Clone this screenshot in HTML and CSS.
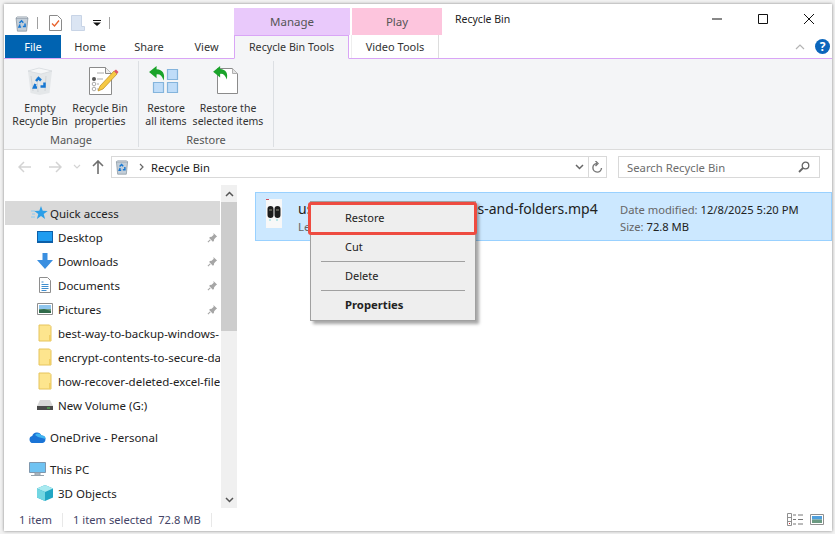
FILE: index.html
```html
<!DOCTYPE html>
<html lang="en">
<head>
<meta charset="utf-8">
<title>Recycle Bin</title>
<link rel="stylesheet" href="styles.css">
</head>
<body>
<svg class="defs" width="0" height="0">
  <defs>
    <symbol id="bin" viewBox="0 0 16 20">
      <path d="M1 3.500h14l-1.600 15.500H2.600z" fill="#c3ced8" stroke="#7d8a96" stroke-width=".8"/>
      <path d="M2.500 2h11l1.500 1.500H1z" fill="#dfe5ea" stroke="#8a96a2" stroke-width=".6"/>
      <path d="M5 9.500l2.500-2.700L9.500 9M11.500 10l.2 3.400H9M7 14H4.500l1.200-2.800" fill="none" stroke="#1677d2" stroke-width="1.800"/>
    </symbol>
    <symbol id="folder" viewBox="0 0 14 18">
      <path d="M1 1h10.500l1.500 1.500V17H1z" fill="#fde58e" stroke="#e6c45c"/>
      <path d="M11 11h2v6h-2z" fill="#f1cf66"/>
    </symbol>
    <symbol id="pin" viewBox="0 0 12 12">
      <path d="M7 1l4 4-1.200.6-2 2.200-.3 2-1.100.7-4-4 .7-1.100 2-.3 2.200-2z" fill="#a6a6a6"/>
      <path d="M3.500 8.500L1 11" stroke="#a6a6a6" stroke-width="1.200"/>
    </symbol>
    <symbol id="greenarrow" viewBox="0 0 18 16">
      <path d="M8 0L0 6.500 8 13V9c3.500-.5 6 1.500 7.500 6.500C17.500 8.500 14.500 3.800 8 3.500z" fill="#1aa32a"/>
    </symbol>
  </defs>
</svg>

<div class="window">
  <header class="titlebar">
    <div class="qat">
      <svg class="qat-bin" width="14" height="17"><use href="#bin"/></svg>
      <span class="qat-sep"></span>
      <svg class="qat-doc" width="13" height="16" viewBox="0 0 13 16"><path d="M.5.500h8l4 4v11H.5z" fill="#fff" stroke="#8a8a8a"/><path d="M3 8.500l2.500 2.500L10 5.500" fill="none" stroke="#e8622c" stroke-width="1.300"/></svg>
      <svg class="qat-blank" width="14" height="16" viewBox="0 0 14 16"><path d="M.5.500h10v11l3 0v4H.5z" fill="#dbe5f3" stroke="#c8d4e6"/></svg>
      <svg class="qat-drop" width="8" height="8" viewBox="0 0 8 8"><path d="M0 1h8v1H0zM0 3.500h8L4 7z" fill="#111"/></svg>
      <span class="qat-sep qat-sep-last"></span>
    </div>
    <div class="context context-manage">Manage</div>
    <div class="context context-play">Play</div>
    <div class="window-title">Recycle Bin</div>
    <div class="controls">
      <svg width="12" height="12" viewBox="0 0 12 12"><path d="M1 6h10" stroke="#111"/></svg>
      <svg width="12" height="12" viewBox="0 0 12 12"><path d="M1.500 1.500h9v9h-9z" fill="none" stroke="#111"/></svg>
      <svg width="12" height="12" viewBox="0 0 12 12"><path d="M1 1l10 10M11 1L1 11" stroke="#111"/></svg>
    </div>
  </header>

  <nav class="tabs">
    <div class="tab tab-file">File</div>
    <div class="tab tab-home">Home</div>
    <div class="tab tab-share">Share</div>
    <div class="tab tab-view">View</div>
    <div class="tab tab-active">Recycle Bin Tools</div>
    <div class="tab tab-video">Video Tools</div>
    <div class="tabs-right">
      <svg width="10" height="6" viewBox="0 0 10 6"><path d="M1 5l4-4 4 4" fill="none" stroke="#b4b4b4" stroke-width="1.200"/></svg>
      <div class="help">?</div>
    </div>
  </nav>

  <section class="ribbon">
    <div class="group group-manage">
      <div class="group-buttons">
        <div class="rbtn rbtn-empty">
          <svg class="ricon" width="30" height="30" viewBox="0 0 30 30">
            <path d="M3 5l11-3 13 3-2.500 22-10 2-9-2z" fill="#e4e7e9"/>
            <path d="M3 5l11-3 13 3-11 3z" fill="#f5f6f7" stroke="#cfd4d8" stroke-width=".6"/>
            <path d="M6 10l2 15M21 10l-1 15M12 11l1 15" stroke="#d0d4d8" stroke-width="1"/>
            <path d="M11 15l2.500-3 2.500 2.500M19.500 16.500v4h-4M12 21.500H9l1.500-3.500" fill="none" stroke="#1677d2" stroke-width="2.500"/>
          </svg>
          <span>Empty<br>Recycle Bin</span>
        </div>
        <div class="rbtn rbtn-props">
          <svg class="ricon ricon-props" width="30" height="30" viewBox="0 0 30 30">
            <path d="M.5 1.500h16l6 6v21H.5z" fill="#fff" stroke="#8b8b8b"/>
            <path d="M16.500 1.500v6h6" fill="#eee" stroke="#8b8b8b"/>
            <path d="M8 7h7M8 13h6M8 18h2M8 23h2" stroke="#aaa"/>
            <circle cx="5" cy="13" r="2" fill="#555"/><circle cx="5" cy="18" r="1.800" fill="#fff" stroke="#888" stroke-width=".7"/><circle cx="5" cy="23" r="1.800" fill="#fff" stroke="#888" stroke-width=".7"/>
            <path d="M25 5l3 3-14 15-5 2 2-5z" fill="#f6c945" stroke="#b9891e" stroke-width=".7"/>
            <path d="M25 5l2-1.500 2.500 2.500L28 8z" fill="#e0566b"/>
          </svg>
          <span>Recycle Bin<br>properties</span>
        </div>
      </div>
      <div class="group-label">Manage</div>
    </div>
    <div class="group group-restore">
      <div class="group-buttons">
        <div class="rbtn rbtn-all">
          <svg class="ricon ricon-all" width="30" height="30" viewBox="0 0 30 30">
            <path d="M18.500 3.500h10v10h-10zM4.500 16.500h10v10h-10zM18.500 16.500h10v10h-10z" fill="#bfdcf8" stroke="#84b4dc" stroke-width="1.200"/>
            <use href="#greenarrow" x="0" y="0" width="17" height="15"/>
          </svg>
          <span>Restore<br>all items</span>
        </div>
        <div class="rbtn rbtn-selected">
          <svg class="ricon ricon-sel" width="30" height="30" viewBox="0 0 30 30">
            <path d="M5.500 2.500h15l5 5v20h-20z" fill="#fff" stroke="#8b8b8b"/>
            <path d="M20.500 2.500v5h5" fill="#e4e4e4" stroke="#b0b0b0"/>
            <use href="#greenarrow" x="1" y="0" width="16" height="14"/>
          </svg>
          <span>Restore the<br>selected items</span>
        </div>
      </div>
      <div class="group-label">Restore</div>
    </div>
  </section>

  <div class="navbar">
    <div class="nav-buttons">
      <svg class="nav-back" width="14" height="12" viewBox="0 0 14 12"><path d="M1 6h12M6 1L1 6l5 5" fill="none" stroke="#d3d3d3" stroke-width="1.500"/></svg>
      <svg class="nav-forward" width="14" height="12" viewBox="0 0 14 12"><path d="M13 6H1M8 1l5 5-5 5" fill="none" stroke="#d3d3d3" stroke-width="1.500"/></svg>
      <svg class="nav-down" width="8" height="5" viewBox="0 0 8 5"><path d="M1 1l3 3 3-3" fill="none" stroke="#d3d3d3" stroke-width="1.200"/></svg>
      <svg class="nav-up" width="12" height="14" viewBox="0 0 12 14"><path d="M6 14V1M1 6l5-5 5 5" fill="none" stroke="#6f6f6f" stroke-width="1.600"/></svg>
    </div>
    <div class="address">
      <svg class="addr-bin" width="14" height="16"><use href="#bin"/></svg>
      <svg class="addr-chev" width="5" height="8" viewBox="0 0 5 8"><path d="M1 1l3 3-3 3" fill="none" stroke="#666" stroke-width="1.200"/></svg>
      <span class="addr-text">Recycle Bin</span>
      <svg class="addr-drop" width="9" height="6" viewBox="0 0 9 6"><path d="M1 1l3.500 3.500L8 1" fill="none" stroke="#666" stroke-width="1.500"/></svg>
      <span class="addr-refresh">
        <svg width="11" height="13" viewBox="0 0 11 13"><path d="M5 2.500a4.300 4.300 0 1 0 4.500 4.500M3.500 0l2.500 2.500-2.500 2.500" fill="none" stroke="#777" stroke-width="1.400"/></svg>
      </span>
    </div>
    <div class="search">
      <span>Search Recycle Bin</span>
      <svg width="12" height="12" viewBox="0 0 12 12"><circle cx="7.500" cy="4.500" r="3.300" fill="none" stroke="#666" stroke-width="1.300"/><path d="M5 7l-4 4" stroke="#666" stroke-width="1.800"/></svg>
    </div>
  </div>

  <main class="content">
    <aside class="sidebar">
      <div class="tree">
        <div class="row row-top selected">
          <svg class="ic-star" width="17" height="15" viewBox="0 0 17 15"><path d="M10 0l1.700 4.800 5 .2-4 3 1.400 5-4.100-2.900L5.900 13l1.400-5-4-3 5-.2z" fill="#2c9fe8"/><path d="M0 5h4M1 8h3M0 11h4" stroke="#8ccbf2"/></svg>
          <span>Quick access</span>
        </div>
        <div class="row">
          <svg class="ic-l2" width="16" height="12" viewBox="0 0 16 12"><path d="M0 0h16v12H0z" fill="#0c5fa8"/><path d="M1 1h14v9H1z" fill="#1e9cf0"/></svg>
          <span class="grow">Desktop</span>
          <svg class="pin" width="11" height="11"><use href="#pin"/></svg>
        </div>
        <div class="row">
          <svg class="ic-l2" width="16" height="16" viewBox="0 0 16 16"><path d="M5.500 0h5v7H16l-8 9-8-9h5.500z" fill="#3a8fe0"/></svg>
          <span class="grow">Downloads</span>
          <svg class="pin" width="11" height="11"><use href="#pin"/></svg>
        </div>
        <div class="row">
          <svg class="ic-l2" width="16" height="16" viewBox="0 0 16 16"><path d="M2.500.500h8l3 3v12h-11z" fill="#fff" stroke="#8e8e8e"/><path d="M4.500 5h2M4.500 7.500h7M4.500 9.500h7M4.500 11.500h7M4.500 13.500h5" stroke="#3e8ed0"/></svg>
          <span class="grow">Documents</span>
          <svg class="pin" width="11" height="11"><use href="#pin"/></svg>
        </div>
        <div class="row">
          <svg class="ic-l2" width="16" height="12" viewBox="0 0 16 12"><path d="M.5.500h15v11H.5z" fill="#fff" stroke="#8e8e8e"/><path d="M2 2h12v4H2z" fill="#8fc6ee"/><path d="M2 6h12v4H2z" fill="#6f9a7e"/><path d="M2 7l5-1 7 2v2H2z" fill="#2f6a4a"/></svg>
          <span class="grow">Pictures</span>
          <svg class="pin" width="11" height="11"><use href="#pin"/></svg>
        </div>
        <div class="row">
          <svg class="ic-folder" width="14" height="18"><use href="#folder"/></svg>
          <span class="grow clip">best-way-to-backup-windows-</span>
        </div>
        <div class="row">
          <svg class="ic-folder" width="14" height="18"><use href="#folder"/></svg>
          <span class="grow clip">encrypt-contents-to-secure-da</span>
        </div>
        <div class="row">
          <svg class="ic-folder" width="14" height="18"><use href="#folder"/></svg>
          <span class="grow clip">how-recover-deleted-excel-file</span>
        </div>
        <div class="row">
          <svg class="ic-l2" width="16" height="10" viewBox="0 0 16 10"><path d="M3 0h10l3 6v4H0V6z" fill="#d8d8d8"/><path d="M0 6h16v4H0z" fill="#4a4a4a"/><path d="M10 7.500h3v1h-3z" fill="#4fd04f"/></svg>
          <span class="grow">New Volume (G:)</span>
        </div>
        <div class="row row-gap">
          <svg class="ic-l1" width="17" height="11" viewBox="0 0 17 11"><path d="M4 11a3.500 3.500 0 0 1-.8-6.900A5 5 0 0 1 12.500 3.500 3.800 3.800 0 0 1 13.500 11z" fill="#1a74d6"/><path d="M6 3a4 4 0 0 1 6.500.5A3.800 3.800 0 0 1 16.800 7L9 5z" fill="#40b4f0"/></svg>
          <span>OneDrive - Personal</span>
        </div>
        <div class="row row-gap">
          <svg class="ic-l1" width="17" height="15" viewBox="0 0 17 15"><path d="M.5.500h16v10H.5z" fill="#6fc3f2" stroke="#7f97ad"/><path d="M6 11h5v2H6zM2 13.500h13" stroke="#97a3ad" fill="#b9c3cc"/></svg>
          <span>This PC</span>
        </div>
        <div class="row">
          <svg class="ic-l2" width="16" height="16" viewBox="0 0 16 16"><path d="M8 0l8 3.500v9L8 16l-8-3.500v-9z" fill="#22a6c4"/><path d="M8 0l8 3.500L8 7 0 3.500z" fill="#a9eaf0"/><path d="M0 3.500L8 7v9l-8-3.500z" fill="#72d6e2"/></svg>
          <span>3D Objects</span>
        </div>
      </div>
      <div class="scrollbar">
        <div class="sb-btn"><svg width="9" height="6" viewBox="0 0 9 6"><path d="M1 5l3.500-3.500L8 5" fill="none" stroke="#555" stroke-width="1.500"/></svg></div>
        <div class="sb-track"><div class="sb-thumb"></div></div>
        <div class="sb-btn"><svg width="9" height="6" viewBox="0 0 9 6"><path d="M1 1l3.500 3.500L8 1" fill="none" stroke="#555" stroke-width="1.500"/></svg></div>
      </div>
    </aside>
    <section class="files">
      <div class="file-item">
        <svg class="file-icon" width="18" height="31" viewBox="0 0 18 31">
          <path d="M1 1h16v29H1z" fill="#f8f8f8"/>
          <path d="M1 1h3v1H1z" fill="#d04a5a"/>
          <rect x="2.500" y="8" width="6" height="12" rx="3" fill="#1c1c1c"/>
          <rect x="9.500" y="8" width="6" height="12" rx="3" fill="#1c1c1c"/>
          <path d="M4 12h3M11 12h3" stroke="#8a8a7a"/>
          <path d="M4 22h2M11 22h2" stroke="#7ed6d8"/>
        </svg>
        <div class="file-main">
          <div class="file-name">use-windows-to-restore-files-and-folders.mp4</div>
          <div class="file-sub">Length: 00:12:34</div>
        </div>
        <div class="file-meta">
          <div><span class="meta-label">Date modified:</span> 12/8/2025 5:20 PM</div>
          <div><span class="meta-label">Size:</span> 72.8 MB</div>
        </div>
      </div>
      <div class="menu">
        <div class="menu-item">Restore</div>
        <div class="menu-item">Cut</div>
        <div class="menu-sep"></div>
        <div class="menu-item">Delete</div>
        <div class="menu-sep"></div>
        <div class="menu-item menu-bold">Properties</div>
      </div>
      <div class="highlight"></div>
    </section>
  </main>

  <footer class="status">
    <span class="st-count">1 item</span>
    <span class="st-div"></span>
    <span class="st-sel">1 item selected&nbsp; 72.8 MB</span>
    <span class="st-div"></span>
    <div class="views">
      <svg width="17" height="13" viewBox="0 0 17 13"><path d="M.5.500h4v12h-4zM.5 4.500h4M.5 8.500h4" fill="#fff" stroke="#8f8f8f"/><path d="M6 2h3M11 2h5M6 6.500h3M11 6.500h5M6 11h3M11 11h5" stroke="#777"/><path d="M2 10h1v1H2z" fill="#c33"/></svg>
      <svg width="14" height="11" viewBox="0 0 14 11"><path d="M.5.500h13v10H.5z" fill="#fff" stroke="#8f8f8f"/><path d="M2 2h10v3.500H2z" fill="#4f9fdc"/><path d="M2 5.500h10V9H2z" fill="#6b9a82"/></svg>
    </div>
  </footer>
</div>
</body>
</html>
```

FILE: styles.css
```css
* { box-sizing: border-box; }
html, body { margin: 0; padding: 0; }
body {
  width: 835px;
  height: 534px;
  overflow: hidden;
  background: #f2f2f2;
  font-family: "Noto Sans", "Open Sans", Arial, sans-serif;
  font-size: 11.5px;
  color: #222;
  padding: 4px 3px 3px 4px;
}
.defs { position: absolute; }
.window {
  width: 828px;
  height: 527px;
  background: #fff;
  display: flex;
  flex-direction: column;
  box-shadow: 0 0 3px rgba(0, 0, 0, .45);
}

/* title bar */
.titlebar { height: 31px; display: flex; flex: none; }
.qat { display: flex; align-items: center; width: 230px; padding: 7px 0 0 11px; flex: none; }
.qat-bin { margin-right: 8px; }
.qat-sep { width: 1px; height: 12px; background: #a0a0a0; }
.qat-doc { margin-left: 11px; }
.qat-blank { margin-left: 9px; }
.qat-drop { margin-left: 8px; }
.qat-sep-last { margin-left: 8px; }
.context {
  margin-top: 4px;
  height: 27px;
  display: flex;
  align-items: center;
  justify-content: center;
  color: #555;
  font-size: 11.5px;
}
.context-manage { width: 116px; background: #e9c9fb; }
.context-play { width: 90px; margin-left: 2px; background: #fdc5dd; }
.window-title { margin-left: 13px; padding-top: 8px; font-size: 10.5px; color: #222; }
.controls {
  margin-left: auto;
  display: flex;
  gap: 34px;
  padding: 9px 17px 0 0;
}

/* tabs */
.tabs {
  height: 24px;
  flex: none;
  display: flex;
  border-bottom: 1px solid #d9a5f6;
  padding-left: 1px;
  font-size: 11px;
  color: #333;
}
.tab { display: flex; align-items: center; justify-content: center; height: 23px; }
.tab-file { width: 56px; background: #0063b1; color: #fff; }
.tab-home { width: 58px; }
.tab-share { width: 60px; }
.tab-view { width: 55px; }
.tab-active {
  width: 115px;
  height: 24px;
  background: #f4f5f7;
  border: 1px solid #d9a5f6;
  border-bottom: 1px solid #f4f5f7;
  margin-right: 2px;
  font-size: 10.7px;
  padding-bottom: 1px;
}
.tab-video {
  width: 88px;
  height: 23px;
  border-right: 1px solid #ddd;
  border-left: 1px solid #eee;
}
.tabs-right {
  margin-left: auto;
  display: flex;
  align-items: center;
  gap: 10px;
  padding-right: 2px;
}
.help {
  width: 15px;
  height: 15px;
  border-radius: 50%;
  background: #0c66bc;
  color: #fff;
  font-weight: 700;
  font-size: 12px;
  line-height: 15px;
  text-align: center;
}

/* ribbon */
.ribbon {
  height: 91px;
  flex: none;
  background: #f4f5f7;
  border-bottom: 1px solid #dcdcdc;
  display: flex;
  padding-top: 2px;
}
.group {
  display: flex;
  flex-direction: column;
  align-items: center;
  height: 86px;
  border-right: 1px solid #dcdfe3;
}
.group-manage { width: 135px; }
.group-restore { width: 135px; }
.group-buttons { display: flex; height: 72px; width: 100%; }
.rbtn {
  display: flex;
  flex-direction: column;
  align-items: center;
  padding-top: 5px;
  line-height: 13px;
  font-size: 10.5px;
  color: #333;
  white-space: nowrap;
  text-align: center;
  flex: none;
}
.ricon { height: 30px; margin-bottom: 6px; flex: none; }
.ricon-props { margin-left: 7px; }
.ricon-all { margin-right: 4px; }
.ricon-sel { margin-right: 2px; }
.rbtn-empty { width: 67px; padding-left: 5px; }
.rbtn-props { width: 58px; }
.rbtn-all { width: 54px; }
.rbtn-selected { width: 70px; }
.group-label { font-size: 11px; color: #555; line-height: 14px; margin-top: 2px; }

/* nav */
.navbar {
  height: 35px;
  flex: none;
  display: flex;
  align-items: flex-start;
  padding-top: 6px;
}
.nav-buttons { width: 107px; height: 21px; display: flex; align-items: center; flex: none; }
.nav-back { margin-left: 14px; }
.nav-forward { margin-left: 16px; }
.nav-down { margin-left: 11px; }
.nav-up { margin-left: 11px; }
.address {
  width: 496px;
  height: 22px;
  border: 1px solid #d9d9d9;
  display: flex;
  align-items: center;
  padding-left: 3px;
  flex: none;
  font-size: 11.2px;
}
.addr-chev { margin-left: 10px; }
.addr-text { margin-left: 7px; color: #222; }
.addr-drop { margin-left: auto; }
.addr-refresh {
  margin-left: 4px;
  width: 18px;
  height: 20px;
  border-left: 1px solid #d9d9d9;
  display: flex;
  align-items: center;
  justify-content: center;
}
.search {
  width: 202px;
  height: 22px;
  margin-left: 11px;
  border: 1px solid #d9d9d9;
  color: #6d6d6d;
  font-size: 11.3px;
  display: flex;
  align-items: center;
  justify-content: space-between;
  padding: 0 9px 0 8px;
  flex: none;
}

/* content */
.content { flex: 1; min-height: 0; display: flex; }
.sidebar { width: 233px; flex: none; display: flex; padding-left: 1px; }
.tree { width: 215px; flex: none; padding-top: 16px; overflow: hidden; }
.row {
  height: 24px;
  display: flex;
  align-items: center;
  padding-left: 32px;
  white-space: nowrap;
  color: #222;
  font-size: 11.5px;
}
.row-top { padding-left: 26px; }
.row-gap { margin-top: 8px; padding-left: 24px; }
.selected { background: #d9d9d9; }
.ic-star { margin-right: 2px; flex: none; }
.ic-l1 { margin-right: 4px; flex: none; }
.ic-l2 { margin-right: 5px; flex: none; }
.ic-folder { margin: 0 6px 0 1px; flex: none; }
.grow { flex: 1; min-width: 0; }
.clip { overflow: hidden; }
.pin { margin-right: 2px; flex: none; }
.scrollbar { width: 16px; margin-left: 1px; display: flex; flex-direction: column; background: #f0f0f0; }
.sb-btn { height: 17px; display: flex; align-items: center; justify-content: center; flex: none; }
.sb-track { flex: 1; }
.sb-thumb { height: 129px; background: #cdcdcd; }

.files { flex: 1; position: relative; padding: 7px 0 0 18px; min-width: 0; }
.file-item {
  height: 49px;
  background: #cce8ff;
  border: 1px solid #99d1ff;
  display: flex;
  padding-left: 9px;
}
.file-icon { margin-top: 5px; flex: none; }
.file-main { width: 322px; margin-left: 15px; padding-top: 6px; flex: none; white-space: nowrap; overflow: hidden; }
.file-name { font-size: 14px; line-height: 19px; color: #222; }
.file-sub { color: #666; line-height: 16px; margin-top: 1px; }
.file-meta { padding-top: 8px; line-height: 17px; font-size: 11.2px; color: #222; white-space: nowrap; }
.meta-label { color: #666; }

.menu {
  position: absolute;
  left: 73px;
  top: 16px;
  width: 166px;
  height: 120px;
  background: #eeeeee;
  border: 1px solid #a0a0a0;
  box-shadow: 3px 3px 3px rgba(0, 0, 0, .35);
  padding-top: 1px;
}
.menu-item { height: 29px; padding-left: 34px; line-height: 29px; color: #222; font-size: 11px; }
.menu-sep { height: 1px; background: #a0a0a0; margin: 0 10px -1px 10px; }
.menu-bold { font-weight: 700; font-size: 11.3px; }
.highlight {
  position: absolute;
  left: 71px;
  top: 17px;
  width: 169px;
  height: 33px;
  border: 3px solid #ee4b40;
  border-radius: 3px;
}

/* status */
.status {
  height: 23px;
  flex: none;
  display: flex;
  align-items: center;
  padding-left: 15px;
  color: #444466;
  font-size: 11.2px;
  white-space: nowrap;
}
.st-div { width: 1px; height: 14px; background: #e8e8e8; margin: 0 10px; flex: none; }
.st-count { width: 33px; flex: none; }
.views { margin-left: auto; display: flex; align-items: center; gap: 6px; padding-right: 8px; }
```
